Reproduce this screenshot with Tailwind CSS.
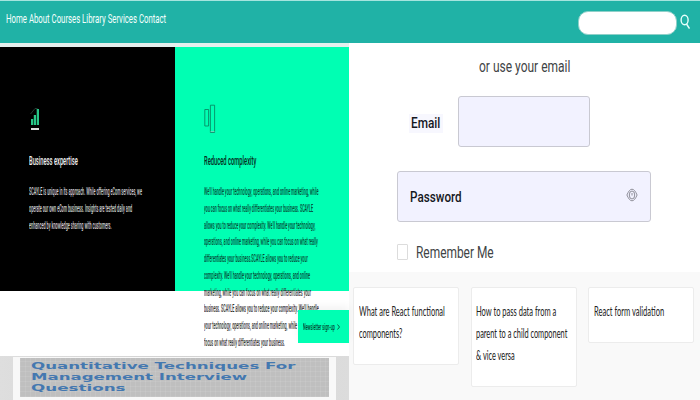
<!DOCTYPE html>
<html lang="en">
<head>
<meta charset="utf-8">
<title>Home</title>
<script src="https://cdn.jsdelivr.net/npm/@tailwindcss/browser@4"></script>
</head>
<body class="w-[700px] h-[400px] overflow-hidden bg-white font-[Roboto,sans-serif]">
<header class="flex h-[43px] justify-between border-t border-[#a5e4de] bg-[#20b2a6]">
  <nav class="w-[300px] pt-[8px] pl-[6px] text-[13px] leading-[20px] text-[#f4fffd]"><div data-w="160" class="w-max origin-left whitespace-nowrap">Home About Courses Library Services Contact</div></nav>
  <div class="flex pt-[10px] pr-[10px]">
    <div class="h-[24px] w-[99px] rounded-[10px] border border-[#8fd0c9] bg-white"></div>
    <svg class="mt-[3px] ml-[3px] h-[16px] w-[10px]" viewBox="0 0 10 16" fill="none" stroke="#e6fffb" stroke-width="1.4"><ellipse cx="4.6" cy="6" rx="3.5" ry="4.7"/><path d="M6.500 10l3 4.500"/></svg>
  </div>
</header>
<main class="flex h-[357px]">
  <section class="relative w-[349px] shrink-0">
    <div class="h-[4px] bg-[#e4efed]"></div>
    <div class="flex h-[244px]">
      <article class="w-[174.5px] shrink-0 bg-black pt-[58px] pl-[29px] text-[#f2f2f2]">
        <svg class="h-[28px] w-[14px]" viewBox="0 0 14 28"><path d="M2 14h2.200v6H2zM4.800 10H7v10H4.800zM7.700 4h2.300v16H7.700z" fill="#27c687"/><path d="M1.500 9l4.500-5.500h2.500" stroke="#3b604f" fill="none" stroke-width=".6"/><path d="M2 23h8v2H2z" fill="#dedede"/></svg>
        <h2 class="mt-[18px] text-[13px] leading-[20px] font-medium"><div data-w="48.7" class="w-max origin-left whitespace-nowrap">Business expertise</div></h2>
        <div class="mt-[13px] text-[11px] leading-[16.75px] font-medium text-[#d5d5d5]">
          <div data-w="112.8" class="w-max origin-left whitespace-nowrap">SCAYLE is unique in its approach. While offering eCom services, we</div>
          <div data-w="103" class="w-max origin-left whitespace-nowrap">operate our own eCom business. Insights are tested daily and</div>
          <div data-w="82.5" class="w-max origin-left whitespace-nowrap">enhanced by knowledge sharing with customers.</div>
        </div>
      </article>
      <article class="w-[174.5px] shrink-0 bg-[#00ffb3] pt-[56px] pl-[29.5px] text-[#064733]">
        <svg class="h-[31px] w-[14px]" viewBox="0 0 14 31" fill="none" stroke="#087d5c" stroke-width=".8"><path d="M.8 6.500h3.800v16.500H.8zM6.400 2.200h4.200v27.300H6.400z"/><path d="M6.500 28.600h4" stroke="#8bcdbb"/></svg>
        <h2 class="mt-[17px] text-[13px] leading-[20px] font-medium text-[#052b20]"><div data-w="52.5" class="w-max origin-left whitespace-nowrap">Reduced complexity</div></h2>
        <div class="mt-[13px] text-[11px] leading-[16.75px] font-medium">
          <div data-w="114.7" class="w-max origin-left whitespace-nowrap">We'll handle your technology, operations, and online marketing, while</div>
          <div data-w="109.3" class="w-max origin-left whitespace-nowrap">you can focus on what really differentiates your business. SCAYLE</div>
          <div data-w="111.5" class="w-max origin-left whitespace-nowrap">allows you to reduce your complexity. We'll handle your technology,</div>
          <div data-w="113.7" class="w-max origin-left whitespace-nowrap">operations, and online marketing, while you can focus on what really</div>
          <div data-w="103.7" class="w-max origin-left whitespace-nowrap">differentiates your business.SCAYLE allows you to reduce your</div>
          <div data-w="106" class="w-max origin-left whitespace-nowrap">complexity. We'll handle your technology, operations, and online</div>
          <div data-w="107" class="w-max origin-left whitespace-nowrap text-[#333]">marketing, while you can focus on what really differentiates your</div>
          <div data-w="114.5" class="w-max origin-left whitespace-nowrap text-[#333]">business. SCAYLE allows you to reduce your complexity. We'll handle</div>
          <div data-w="93" class="w-max origin-left whitespace-nowrap text-[#333]">your technology, operations, and online marketing, while</div>
          <div data-w="81" class="w-max origin-left whitespace-nowrap text-[#333]">focus on what really differentiates your business.</div>
        </div>
      </article>
    </div>
    <div class="h-[64.5px] bg-white"></div>
    <div class="h-[44.5px] bg-linear-to-r from-[#dedede] via-[#d2d2d2] to-[#dcdcdc] px-[13px] pt-[1.5px]">
      <div class="h-full bg-[#f8f8f8] px-[7px] pt-px pb-[3px]">
        <div class="h-[39px] bg-[#bfbfbf] bg-[repeating-linear-gradient(90deg,#ffffff14_0_1px,transparent_1px_5px),repeating-linear-gradient(0deg,#ffffff14_0_1px,transparent_1px_5px)] pt-[2.5px] pl-[11px] font-['DejaVu_Sans',sans-serif] text-[8.5px] leading-[11px] font-bold text-[#4478b0]">
          <div data-w="264.5" class="w-max origin-left whitespace-nowrap">Quantitative Techniques For</div>
          <div data-w="216.5" class="w-max origin-left whitespace-nowrap">Management Interview</div>
          <div data-w="94.5" class="w-max origin-left whitespace-nowrap">Questions</div>
        </div>
      </div>
    </div>
    <div class="absolute top-[267px] left-[298px] z-10 h-[33px] w-[51px] bg-[#00ffb3] pt-[10px] pl-[5px] text-[8.5px] leading-[14px] font-medium text-[#04402e] shadow-[0_-4px_8px_#0000000d]"><div class="flex w-max items-center gap-[2px]"><div class="w-[32px]"><div data-w="32" class="w-max origin-left whitespace-nowrap">Newsletter sign-up</div></div><svg class="h-[6px] w-[3px]" viewBox="0 0 3 6" fill="none" stroke="#04402e" stroke-width=".8"><path d="M.5.5l2 2.500-2 2.500"/></svg></div></div>
  </section>
  <section class="flex w-[351px] flex-col">
    <form class="h-[229px] shrink-0 pl-[48.4px] text-[16px] text-[#3f4446]">
      <div class="pt-[14px] pl-[81.5px] leading-[20px]"><div data-w="91.5" class="w-max origin-left whitespace-nowrap">or use your email</div></div>
      <div class="mt-[19px] flex h-[51px] items-center pl-[11.5px]">
        <label class="mt-[3px] h-[19px] w-[34px] bg-[#f7f7fe] pl-[2px] text-[15.5px] leading-[19px] font-medium text-[#15181d]"><div data-w="29.7" class="w-max origin-left whitespace-nowrap">Email</div></label>
        <div class="ml-[15px] h-[51px] w-[132.5px] rounded-[3px] border-[1.5px] border-[#c9c9d2] bg-[#f2f2ff]"></div>
      </div>
      <div class="mt-[23.5px] flex h-[51px] w-[254px] justify-between rounded-[3px] border-[1.5px] border-[#c9c9d2] bg-[#f2f2ff] pr-[12px] pl-[12px]">
        <div class="w-[100px] pt-[15.5px] text-[15.5px] leading-[20px] font-medium text-[#15181d]"><div data-w="52" class="w-max origin-left whitespace-nowrap">Password</div></div>
        <svg class="mt-[16px] h-[14px] w-[12px]" viewBox="0 0 12 14" fill="none" stroke="#85858f" stroke-width=".9"><path d="M.9 7C2.400 3.500 4 1.200 6 1.200S9.600 3.500 11.100 7C9.600 10.500 8 12.800 6 12.800S2.400 10.500.9 7z"/><ellipse cx="6" cy="7" rx="2.700" ry="4"/><path d="M6 5v2.500"/></svg>
      </div>
      <div class="mt-[21px] flex">
        <div class="mt-[1.400px] h-[16px] w-[11px] rounded-[1px] border border-[#dcdcdc] bg-white"></div>
        <div class="ml-[7.500px] w-[100px] leading-[20px]"><div data-w="77.500" class="w-max origin-left whitespace-nowrap">Remember Me</div></div>
      </div>
    </form>
    <div class="flex h-[128px] items-start gap-[11.500px] bg-[#f9f9f9] pt-[15px] pl-[4.400px] font-[Lato,sans-serif] text-[14px] leading-[22px] text-[#222]">
      <div class="h-[77.500px] w-[106px] shrink-0 rounded-[2px] border border-[#ececec] bg-white pt-[12px] pl-[4.500px]">
        <div data-w="85.700" class="w-max origin-left whitespace-nowrap">What are React functional</div>
        <div data-w="43.500" class="w-max origin-left whitespace-nowrap">components?</div>
      </div>
      <div class="h-[99.500px] w-[106px] shrink-0 rounded-[2px] border border-[#ececec] bg-white pt-[12px] pl-[4.500px]">
        <div data-w="80.500" class="w-max origin-left whitespace-nowrap">How to pass data from a</div>
        <div data-w="91.500" class="w-max origin-left whitespace-nowrap">parent to a child component</div>
        <div data-w="39" class="w-max origin-left whitespace-nowrap">&amp; vice versa</div>
      </div>
      <div class="h-[56px] w-[106px] shrink-0 rounded-[2px] border border-[#ececec] bg-white pt-[12px] pl-[4.500px]">
        <div data-w="70" class="w-max origin-left whitespace-nowrap">React form validation</div>
      </div>
    </div>
  </section>
</main>
<script>
// Condense or widen each line of text to its set width, whenever its natural width changes.
function fit(el) {
  if (el.offsetWidth) el.style.transform = 'scaleX(' + (parseFloat(el.dataset.w) / el.offsetWidth) + ')';
}
var lines = document.querySelectorAll('[data-w]');
var observer = new ResizeObserver(function (entries) {
  entries.forEach(function (e) { fit(e.target); });
});
lines.forEach(function (el) { fit(el); observer.observe(el); });
window.addEventListener('load', function () { lines.forEach(fit); });
</script>
</body>
</html>
